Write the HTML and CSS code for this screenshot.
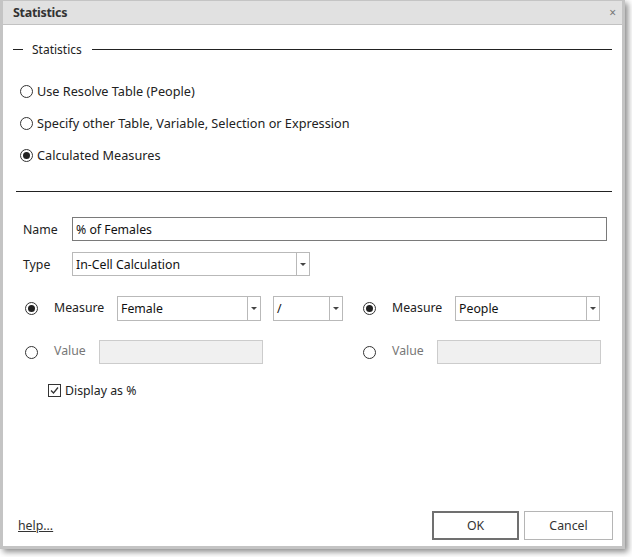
FILE: index.html
```html
<!DOCTYPE html>
<html>
<head>
<meta charset="utf-8">
<link rel="stylesheet" href="styles.css">
</head>
<body>
<div class="dialog">
  <div class="titlebar">
    <span class="title">Statistics</span>
    <span class="close">&#215;</span>
  </div>
  <div class="content">
    <div class="legend">
      <span class="dash"></span>
      <span class="legend-text">Statistics</span>
      <span class="rule"></span>
    </div>
    <div class="options">
      <div class="opt"><span class="radio"></span><span>Use Resolve Table (People)</span></div>
      <div class="opt"><span class="radio"></span><span>Specify other Table, Variable, Selection or Expression</span></div>
      <div class="opt"><span class="radio checked"></span><span>Calculated Measures</span></div>
    </div>
    <div class="sep"></div>
    <div class="form">
      <div class="frow name-row">
        <span class="flabel">Name</span>
        <div class="textbox name-box">% of Females</div>
      </div>
      <div class="frow type-row">
        <span class="flabel">Type</span>
        <div class="select type-sel"><span class="sel-text">In-Cell Calculation</span><span class="arrow"></span></div>
      </div>
      <div class="mrow measure-row">
        <span class="radio checked"></span>
        <span class="mlabel">Measure</span>
        <div class="select msel"><span class="sel-text">Female</span><span class="arrow"></span></div>
        <div class="select opsel"><span class="sel-text">/</span><span class="arrow"></span></div>
        <span class="radio checked r2"></span>
        <span class="mlabel">Measure</span>
        <div class="select msel2"><span class="sel-text">People</span><span class="arrow"></span></div>
      </div>
      <div class="mrow value-row">
        <span class="radio"></span>
        <span class="vlabel">Value</span>
        <div class="textbox disabled"></div>
        <span class="radio r3"></span>
        <span class="vlabel">Value</span>
        <div class="textbox disabled"></div>
      </div>
      <div class="check-row">
        <span class="checkbox"><svg width="11" height="11" viewBox="0 0 11 11"><path d="M2 5.5 L4.5 8 L9 2.5" fill="none" stroke="#333" stroke-width="1.3"/></svg></span>
        <span>Display as %</span>
      </div>
    </div>
  </div>
  <div class="footer">
    <a class="help" href="#">help...</a>
    <div class="buttons">
      <div class="btn ok">OK</div>
      <div class="btn cancel">Cancel</div>
    </div>
  </div>
</div>
</body>
</html>
```
FILE: styles.css
```css
* { box-sizing: border-box; }
html, body { margin: 0; padding: 0; background: #ffffff; }
body {
  font-family: "Noto Sans", "Open Sans", sans-serif;
  font-size: 12.3px;
  color: #333333;
  width: 632px;
  height: 557px;
  overflow: hidden;
}
.dialog {
  width: 625px;
  height: 549px;
  border: 3px solid #c4c4c4;
  border-top-width: 1px;
  background: #ffffff;
  box-shadow: 3px 3px 6px rgba(0, 0, 0, 0.45);
  display: flex;
  flex-direction: column;
}
.titlebar {
  height: 24px;
  background: #e1e1e1;
  border-bottom: 1px solid #c2c2c2;
  display: flex;
  align-items: center;
  justify-content: space-between;
  padding: 0 6px 0 10px;
}
.title {
  font-weight: bold;
  font-size: 12.5px;
  letter-spacing: -0.3px;
  color: #333333;
}
.close {
  font-size: 12px;
  color: #777777;
}
.content {
  padding: 16px 10px 0 10px;
}
.legend {
  display: flex;
  align-items: center;
  height: 16px;
  font-size: 12px;
}
.dash {
  width: 10px;
  border-top: 1px solid #222222;
  margin-right: 9px;
}
.legend-text { color: #222222; }
.rule {
  flex: 1;
  border-top: 1px solid #222222;
  margin-left: 10px;
}
.options {
  padding: 24px 0 0 7px;
  display: flex;
  flex-direction: column;
  gap: 12px;
  font-size: 12.7px;
}
.opt {
  display: flex;
  align-items: center;
  height: 20px;
  gap: 4px;
  color: #222222;
}
.radio {
  width: 13px;
  height: 13px;
  border: 1px solid #333333;
  border-radius: 50%;
  display: inline-flex;
  align-items: center;
  justify-content: center;
  flex: none;
}
.radio.checked::after {
  content: "";
  width: 7px;
  height: 7px;
  border-radius: 50%;
  background: #222222;
}
.sep {
  margin: 26px 0 0 3px;
  border-top: 1px solid #222222;
}
.form {
  padding: 25px 0 0 10px;
}
.frow {
  display: flex;
  align-items: center;
}
.flabel {
  width: 49px;
  color: #222222;
}
.type-row { margin-top: 11px; }
.textbox {
  height: 24px;
  border: 1px solid #7a7a7a;
  padding: 0 3px;
  display: flex;
  align-items: center;
  color: #111111;
}
.name-box { width: 535px; }
.select {
  height: 25px;
  border: 1px solid #b9b9b9;
  display: flex;
  align-items: stretch;
  color: #111111;
}
.sel-text {
  flex: 1;
  display: flex;
  align-items: center;
  padding-left: 3px;
}
.arrow {
  width: 13px;
  border-left: 1px solid #b9b9b9;
  display: flex;
  align-items: center;
  justify-content: center;
}
.arrow::after {
  content: "";
  border-left: 3px solid transparent;
  border-right: 3px solid transparent;
  border-top: 3px solid #444444;
}
.type-sel { width: 238px; height: 24px; }
.mrow {
  display: flex;
  align-items: center;
  padding-left: 2px;
}
.measure-row { margin-top: 20px; }
.mrow .radio { margin-right: 16px; }
.mlabel { width: 63px; color: #222222; margin-top: -3px; }
.msel { width: 144px; }
.opsel { width: 70px; margin-left: 12px; }
.msel2 { width: 145px; }
.r2 { margin-left: 20px; }
.value-row { margin-top: 19px; }
.vlabel { width: 45px; color: #777777; margin-top: -3px; }
.textbox.disabled {
  width: 164px;
  background: #f0f0f0;
  border-color: #cccccc;
}
.r3 { margin-left: 100px; }
.check-row {
  display: flex;
  align-items: center;
  gap: 4px;
  margin-top: 18px;
  padding-left: 25px;
  color: #222222;
}
.checkbox {
  width: 13px;
  height: 13px;
  border: 1px solid #333333;
  display: inline-flex;
  align-items: center;
  justify-content: center;
}
.footer {
  margin-top: auto;
  display: flex;
  align-items: center;
  justify-content: space-between;
  padding: 0 9px 6px 15px;
}
.help {
  color: #333333;
  text-decoration: underline;
}
.buttons {
  display: flex;
  gap: 5px;
}
.btn {
  height: 29px;
  display: flex;
  align-items: center;
  justify-content: center;
  color: #333333;
}
.ok {
  width: 87px;
  border: 2px solid #707070;
}
.cancel {
  width: 89px;
  border: 1px solid #b5b5b5;
}
```
